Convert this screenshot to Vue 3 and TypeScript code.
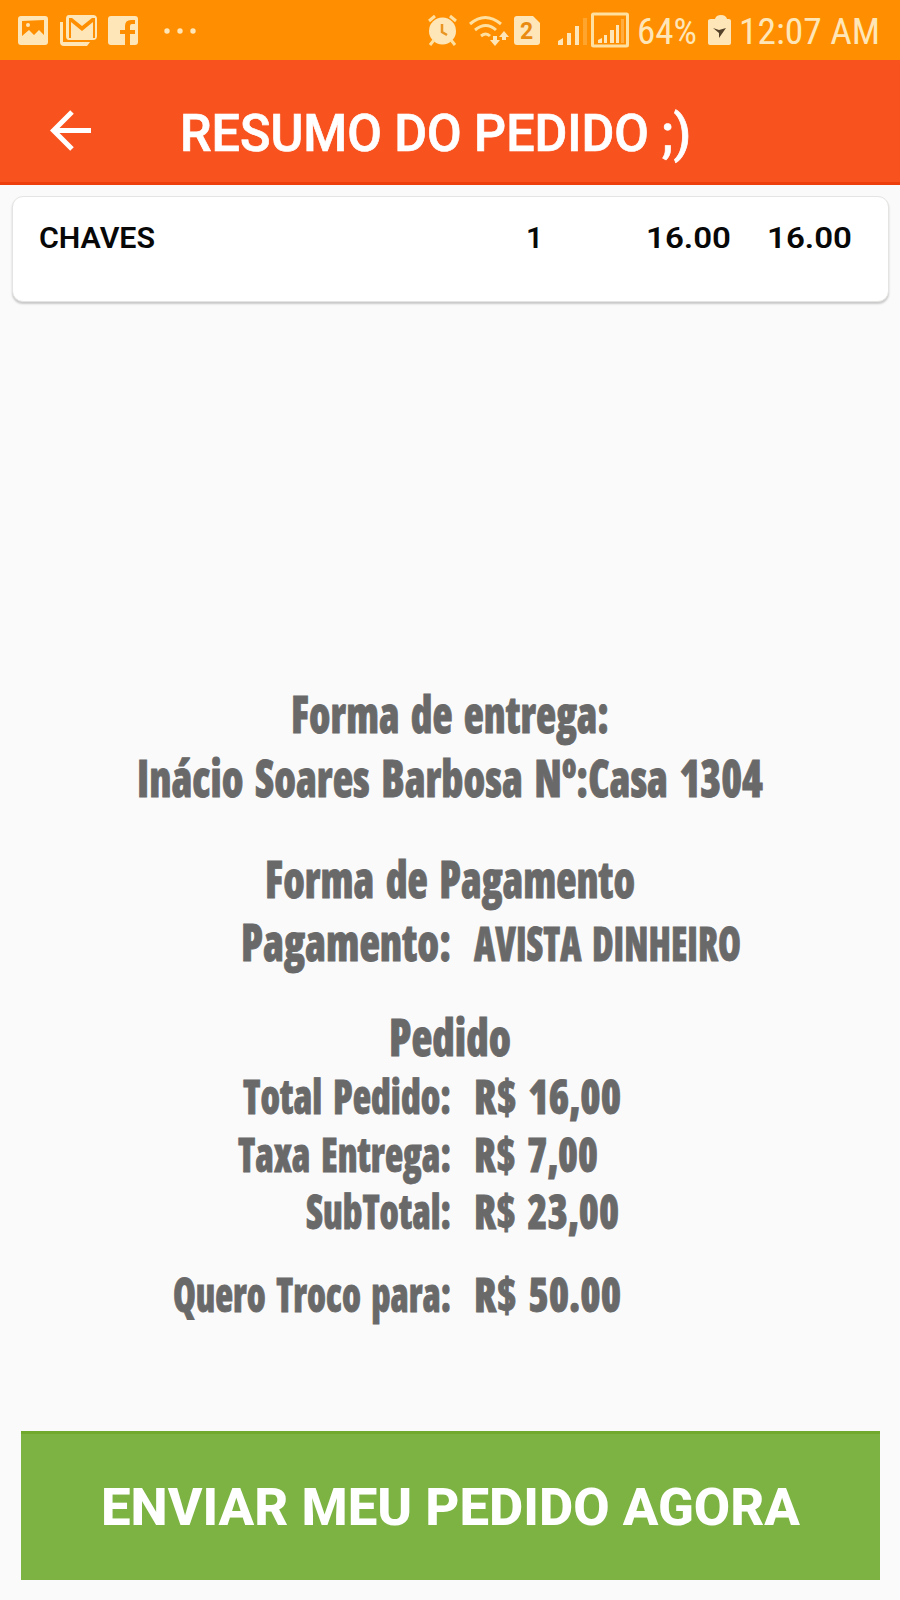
<script setup lang="ts">
import { h, type FunctionalComponent } from 'vue'

interface FitProps {
  text: string
  width: number
  size: number
}

// One line of text fitted to an exact width; its baseline sits 16px above the bottom edge.
const FitText: FunctionalComponent<FitProps> = (props) =>
  h('svg', { width: props.width, height: 50, viewBox: `0 0 ${props.width} 50`, class: 'fit' }, [
    h(
      'text',
      {
        x: 0,
        y: 34,
        'font-size': props.size,
        textLength: props.width,
        lengthAdjust: 'spacingAndGlyphs',
      },
      props.text,
    ),
  ])
FitText.props = ['text', 'width', 'size']

interface Line {
  kind: string
  text: string
  width: number
  size: number
  value?: string
  valueWidth?: number
}

const lines: Line[] = [
  { kind: 'first', text: 'Forma de entrega:', width: 318, size: 52 },
  { kind: 'address', text: 'Inácio Soares Barbosa Nº:Casa 1304', width: 626, size: 52 },
  { kind: 'payment', text: 'Forma de Pagamento', width: 370, size: 52 },
  { kind: 'method', text: 'Pagamento:', width: 210, size: 51, value: 'AVISTA DINHEIRO', valueWidth: 267 },
  { kind: 'order', text: 'Pedido', width: 122, size: 52 },
  { kind: 'total', text: 'Total Pedido:', width: 208, size: 47.5, value: 'R$ 16,00', valueWidth: 147 },
  { kind: 'fee', text: 'Taxa Entrega:', width: 213, size: 47.5, value: 'R$ 7,00', valueWidth: 124 },
  { kind: 'sub', text: 'SubTotal:', width: 145, size: 47.5, value: 'R$ 23,00', valueWidth: 145 },
  { kind: 'change', text: 'Quero Troco para:', width: 278, size: 47.5, value: 'R$ 50.00', valueWidth: 147 },
]
</script>

<template>
  <main class="screen">
    <div class="status">
      <svg class="icons" width="210" height="60" viewBox="0 0 210 60">
        <path fill-rule="evenodd" d="M21 16h24q3 0 3 3v23q0 3-3 3H21q-3 0-3-3V19q0-3 3-3zm1 5v15l7-6 5 5 5-5 5 5V20z" />
        <circle cx="28" cy="25" r="2" />
        <path d="M60 22h3v20h27l-3 4H64q-4 0-4-4z" />
        <path fill-rule="evenodd" d="M69 15h24q4 0 4 4v17q0 4-4 4H69q-3 0-3-4V19q0-4 3-4zm0 3v20h2V22l11 9 11-9v16h2V18h-3l-10 8-10-8z" />
        <path fill-rule="evenodd" d="M111 16h24q3 0 3 3v23q0 3-3 3h-5V34h5v-4h-5v-4q0-2 2-2h3v-4h-4q-6 0-6 6v4h-5v4h5v11h-14q-3 0-3-3V19q0-3 3-3z" />
        <circle cx="167" cy="31" r="2.7" />
        <circle cx="180" cy="31" r="2.7" />
        <circle cx="193" cy="31" r="2.7" />
      </svg>
      <svg class="icons signals" width="210" height="60" viewBox="0 0 210 60">
        <circle cx="22.500" cy="31" r="13.500" />
        <path class="stroke" d="M9 21l6-5M30 16l6 5M14 40l-4 5M31 40l4 5" />
        <path class="dark" d="M22 24v8l5 3" />
        <path class="stroke" d="M50 24q15-13 31 0M55 30q11-9 21 0M61 36q5-4 9 0" />
        <path d="M73 36h4v4h3l-5 6-5-6h3zM82 40v-3h-3l5-6 5 6h-3v3z" />
        <path d="M97 16h16l7 7v19q0 3-3 3H97q-3 0-3-3V19q0-3 3-3z" />
        <text class="sim" x="106.500" y="39">2</text>
        <path d="M138 45v-4l5-3v7zM147 45V33h4v12zM155 45V26h4v19z" />
        <path opacity=".25" d="M163 45V18h4v27z" />
        <rect class="stroke" x="172.500" y="14" width="35" height="32" rx="1" />
        <path d="M178 43v-3l4-2v5zM184 43v-8h3v8zM190 43V30h4v13zM196 43V25h3v18z" />
        <path opacity=".35" d="M201 43V19h3v24z" />
      </svg>
      <svg class="icons clock" width="250" height="60" viewBox="0 0 250 60">
        <text x="-2" y="44" font-size="36" textLength="60" lengthAdjust="spacingAndGlyphs">64%</text>
        <path d="M72 19h4q1-4 6-4t6 4h2q2 0 2 2v22q0 2-2 2H71q-2 0-2-2V21q0-2 3-2z" />
        <path class="bolt" d="M74 28l6 2 7-2-7 10v-5z" />
        <text x="100" y="44" font-size="36" textLength="141" lengthAdjust="spacingAndGlyphs">12:07 AM</text>
      </svg>
    </div>

    <header class="bar">
      <svg class="arrow" width="42" height="42" viewBox="0 0 42 42">
        <path d="M41 20.500H4M22 2L3.500 20.500 22 39" />
      </svg>
      <FitText class="title" text="RESUMO DO PEDIDO ;)" :width="511" :size="51.5" />
    </header>

    <section class="card">
      <FitText class="name" text="CHAVES" :width="116" :size="29.5" />
      <FitText class="qty" text="1" :width="17" :size="30" />
      <FitText class="price" text="16.00" :width="85" :size="30" />
      <FitText class="amount" text="16.00" :width="85" :size="30" />
    </section>

    <section class="summary">
      <div v-for="line in lines" :key="line.kind" class="line" :class="[line.kind, { pair: line.value }]">
        <div class="label"><FitText :text="line.text" :width="line.width" :size="line.size" /></div>
        <div v-if="line.value" class="value">
          <FitText :text="line.value" :width="line.valueWidth ?? 0" :size="47.5" />
        </div>
      </div>
    </section>

    <button class="send" type="button">
      <FitText text="ENVIAR MEU PEDIDO AGORA" :width="699" :size="52.5" />
    </button>
  </main>
</template>

<style>
body {
  margin: 0;
  background: #fafafa;
}
.fit {
  display: block;
  flex: none;
  overflow: visible;
}
</style>

<style scoped>
.screen {
  width: 900px;
  height: 1600px;
  overflow: hidden;
  display: flex;
  flex-direction: column;
  background: #fafafa;
  font-family: Roboto, "Liberation Sans", sans-serif;
}
.status {
  height: 60px;
  flex: none;
  display: flex;
  background: #ff8f00;
}
.icons {
  fill: #ffe6b8;
  flex: none;
}
.signals {
  margin-left: 210px;
}
.clock {
  margin-left: 9px;
  overflow: visible;
  font-stretch: 75%;
}
.stroke {
  fill: none;
  stroke: #ffe0a0;
  stroke-width: 3;
}
.dark {
  fill: none;
  stroke: #e99524;
  stroke-width: 2.500;
}
.sim {
  fill: #e98b10;
  font-size: 23px;
  font-weight: 700;
  text-anchor: middle;
}
.bolt {
  fill: #55422a;
}
.bar {
  box-sizing: border-box;
  height: 125px;
  flex: none;
  display: flex;
  align-items: flex-start;
  padding: 50px 0 0 50px;
  background: #f8521f;
  border-bottom: 3px solid #ed3f0b;
}
.arrow {
  fill: none;
  stroke: #fff;
  stroke-width: 5;
}
.title {
  margin: 7px 0 0 88px;
  fill: #fff;
  stroke: #fff;
  stroke-width: 0.7px;
  font-weight: 500;
}
.card {
  box-sizing: border-box;
  width: 877px;
  height: 106px;
  flex: none;
  margin: 11px 0 0 12px;
  padding: 17px 0 0 26px;
  display: flex;
  background: #fff;
  border: 1px solid #e4e4e2;
  border-radius: 11px;
  box-shadow: 0 2px 2px #c9c9c9;
  fill: #080808;
  font-weight: 600;
}
.qty {
  margin-left: 371px;
}
.price {
  margin-left: 103px;
}
.amount {
  margin-left: 36px;
}
.summary {
  flex: none;
  margin-top: 383px;
  fill: #696969;
  stroke: #696969;
  stroke-width: 0.8px;
  font-family: "Open Sans", "Noto Sans", sans-serif;
  font-weight: 800;
  font-stretch: 75%;
  word-spacing: 5px;
}
.line {
  display: flex;
  justify-content: center;
  align-items: flex-end;
  height: 64px;
}
.line.pair {
  display: grid;
  grid-template-columns: 451px 1fr;
  column-gap: 23px;
}
.pair .label {
  justify-self: end;
}
.payment {
  height: 101px;
}
.method {
  height: 63px;
}
.order {
  height: 95px;
}
.total,
.fee {
  height: 58px;
}
.sub {
  height: 57px;
}
.change {
  height: 83px;
}
.send {
  width: 859px;
  height: 149px;
  flex: none;
  margin: 103px 0 0 21px;
  padding: 48px 0 0 79px;
  display: flex;
  align-items: flex-start;
  border: 0;
  border-top: 3px solid #70a92d;
  background: #7cb342;
  fill: #fff;
  font-family: Roboto, sans-serif;
  font-weight: 800;
  box-sizing: border-box;
}
.send :deep(svg) {
  margin: 9px 0 0 1px;
}
</style>
